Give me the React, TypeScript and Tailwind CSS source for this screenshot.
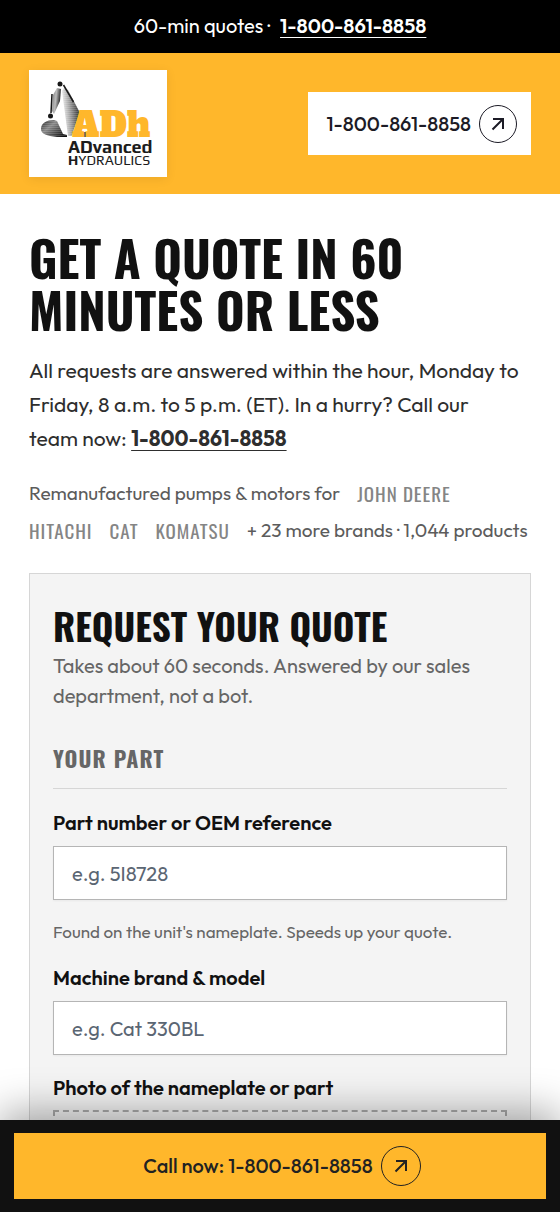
const PHONE = "1-800-861-8858";
const PHONE_HREF = "tel:+18008618858";

const brands = ["John Deere", "Hitachi", "Cat", "Komatsu"];

function ArrowCircle({ className }: { className: string }) {
  return (
    <span
      className={`flex shrink-0 items-center justify-center rounded-full border border-current ${className}`}
    >
      <svg
        viewBox="0 0 14 14"
        className="size-3.5"
        fill="none"
        stroke="currentColor"
        strokeWidth="2"
        aria-hidden="true"
      >
        <path d="M1.5 12.5 12 2M2 2H12v10" />
      </svg>
    </span>
  );
}

function Logo() {
  return (
    <svg
      viewBox="0 0 138 107"
      className="w-[138px] bg-white shadow-[0_2px_10px_rgba(0,0,0,0.08)]"
      role="img"
      aria-label="ADh Advanced Hydraulics"
    >
      <defs>
        <linearGradient id="boom" x1="0" y1="0.3" x2="1" y2="0.1">
          <stop offset="0" stopColor="#f0f0f0" />
          <stop offset="0.5" stopColor="#888" />
          <stop offset="1" stopColor="#1c1c1c" />
        </linearGradient>
        <linearGradient id="stick" x1="0" y1="0" x2="1" y2="0.3">
          <stop offset="0" stopColor="#777" />
          <stop offset="0.5" stopColor="#bbb" />
          <stop offset="1" stopColor="#222" />
        </linearGradient>
        <linearGradient id="bucket" x1="0" y1="0" x2="1" y2="0.8">
          <stop offset="0" stopColor="#222" />
          <stop offset="0.4" stopColor="#888" />
          <stop offset="1" stopColor="#111" />
        </linearGradient>
        <pattern id="hatch" width="2" height="2" patternUnits="userSpaceOnUse">
          <path d="M0 1.5h2" stroke="#fff" strokeWidth="0.5" opacity="0.3" />
        </pattern>
      </defs>
      <path d="M33 21 35 18 39 20 51 43 46 66H39Z" fill="url(#boom)" />
      <path d="M33 21 35 18 39 20 51 43 46 66H39Z" fill="url(#hatch)" />
      <path d="M24 25 28 18 32 19 31 31 25 44 23 41Z" fill="url(#stick)" />
      <path
        d="M12 59C12 53 18 50 25 50L28 51 34 64 38 65V67H28C18 66 12 64 12 59Z"
        fill="url(#bucket)"
      />
      <path
        d="M12 59C12 53 18 50 25 50L28 51 34 64 38 65V67H28C18 66 12 64 12 59Z"
        fill="url(#hatch)"
      />
      <path
        d="M23 24 22 43M34.5 15 44.5 32"
        fill="none"
        stroke="#171717"
        strokeWidth="1.5"
      />
      <circle cx="31" cy="14" r="2.5" fill="#171717" />
      <circle cx="21.5" cy="46" r="2.5" fill="#171717" />
      <path d="M42 68 51 41H62L72 68Z" fill="#fff" />
      <path d="M50 67 52 62H59L61 67Z" fill="#555" />
      <text
        x="43"
        y="67"
        fontSize="34"
        fontFamily="'Alfa Slab One', 'DejaVu Serif', serif"
        fill="#ffb72b"
      >
        ADh
      </text>
      <text
        x="39"
        y="83"
        fontSize="18"
        fontWeight="700"
        fontFamily="'Play', 'DejaVu Sans', sans-serif"
        fill="#1c1c1c"
      >
        ADvanced
      </text>
      <text
        x="39"
        y="95"
        fontSize="14"
        fontFamily="'Play', 'DejaVu Sans', sans-serif"
        fill="#1c1c1c"
      >
        <tspan fontWeight="700">H</tspan>YDRAULICS
      </text>
    </svg>
  );
}

function TextField({
  id,
  label,
  placeholder,
  hint,
}: {
  id: string;
  label: string;
  placeholder: string;
  hint?: string;
}) {
  return (
    <div>
      <label
        htmlFor={id}
        className="block text-[20px] leading-[30px] font-semibold text-[#111]"
      >
        {label}
      </label>
      <input
        id={id}
        type="text"
        placeholder={placeholder}
        aria-describedby={hint ? `${id}-hint` : undefined}
        className="mt-2 block h-[54px] w-full border border-[#b5b5b5] bg-white px-[18px] text-[20px] shadow-xs placeholder:text-[#5b6673]"
      />
      {hint && (
        <p
          id={`${id}-hint`}
          className="mt-[18px] text-[17px] leading-[27px] text-[#666]"
        >
          {hint}
        </p>
      )}
    </div>
  );
}

export default function App() {
  return (
    <div className="min-h-screen bg-white font-['Outfit','Lato',sans-serif] text-[#111]">
      <div className="flex h-[53px] items-center justify-center bg-black pb-0.5 text-[20px] text-white">
        <span>60-min quotes ·</span>
        <a
          href={PHONE_HREF}
          className="ml-2.5 font-semibold underline decoration-1 underline-offset-4"
        >
          {PHONE}
        </a>
      </div>

      <header className="flex items-center justify-between bg-[#ffb72b] px-[29px] py-[17px]">
        <a href="/">
          <Logo />
        </a>
        <a
          href={PHONE_HREF}
          className="flex h-[63px] items-center gap-2 bg-white pr-3.5 pl-[18px] text-[20px] font-medium text-[#1c1b26]"
        >
          {PHONE}
          <ArrowCircle className="size-[38px]" />
        </a>
      </header>

      <main className="px-[29px] pt-[37px]">
        <h1 className="font-['Oswald','Liberation_Sans_Narrow',sans-serif] text-[49px] leading-[52px] font-bold uppercase">
          Get a quote in 60 minutes or less
        </h1>
        <p className="mt-[18px] text-[21px] leading-[34px] text-[#2e2e2e]">
          All requests are answered within the hour, Monday to Friday, 8 a.m. to
          5 p.m. (ET). In a hurry? Call our team&nbsp;now:{" "}
          <a
            href={PHONE_HREF}
            className="font-bold underline decoration-1 underline-offset-4"
          >
            {PHONE}
          </a>
        </p>

        <div className="mt-6 flex flex-wrap items-center gap-x-[17px] gap-y-2 text-[19px] leading-[29px] text-[#5c5c5c]">
          <span>Remanufactured pumps &amp; motors for</span>
          {brands.map((brand) => (
            <span
              key={brand}
              className="font-['Oswald','Liberation_Sans_Narrow',sans-serif] tracking-wider text-[#858585] uppercase"
            >
              {brand}
            </span>
          ))}
          <span>+ 23 more brands · 1,044 products</span>
        </div>

        <form className="mt-7 border border-[#d6d6d6] bg-[#f4f4f4] px-[23px] pt-[29px] pb-3">
          <h2 className="font-['Oswald','Liberation_Sans_Narrow',sans-serif] text-[37px] leading-[46px] font-bold uppercase">
            Request your quote
          </h2>
          <p className="mt-0.5 text-[20px] leading-[30px] text-[#666]">
            Takes about 60 seconds. Answered by our sales department, not a bot.
          </p>

          <fieldset className="mt-[29px]">
            <legend className="w-full border-b border-[#d6d6d6] pb-3 font-['Oswald','Liberation_Sans_Narrow',sans-serif] text-[22px] leading-[36px] font-bold tracking-wider text-[#666] uppercase">
              Your part
            </legend>
            <div className="mt-[19px] flex flex-col gap-[18px]">
              <TextField
                id="part-number"
                label="Part number or OEM reference"
                placeholder="e.g. 5I8728"
                hint="Found on the unit's nameplate. Speeds up your quote."
              />
              <TextField
                id="machine"
                label="Machine brand & model"
                placeholder="e.g. Cat 330BL"
              />
              <div>
                <label
                  htmlFor="photo"
                  className="block text-[20px] leading-[30px] font-semibold text-[#111]"
                >
                  Photo of the nameplate or part
                </label>
                <div className="mt-[7px] h-20 border-2 border-dashed border-[#aaa]">
                  <input id="photo" type="file" className="size-full opacity-0" />
                </div>
              </div>
            </div>
          </fieldset>
        </form>
      </main>

      <div className="fixed inset-x-0 bottom-0 bg-[#111] px-3.5 py-[13px] shadow-[0_-8px_40px_rgba(0,0,0,0.35)]">
        <a
          href={PHONE_HREF}
          className="flex h-[66px] items-center justify-center gap-2 bg-[#ffb72b] pl-1 text-[20px] font-medium text-[#222]"
        >
          Call now: {PHONE}
          <ArrowCircle className="size-10" />
        </a>
      </div>
    </div>
  );
}
